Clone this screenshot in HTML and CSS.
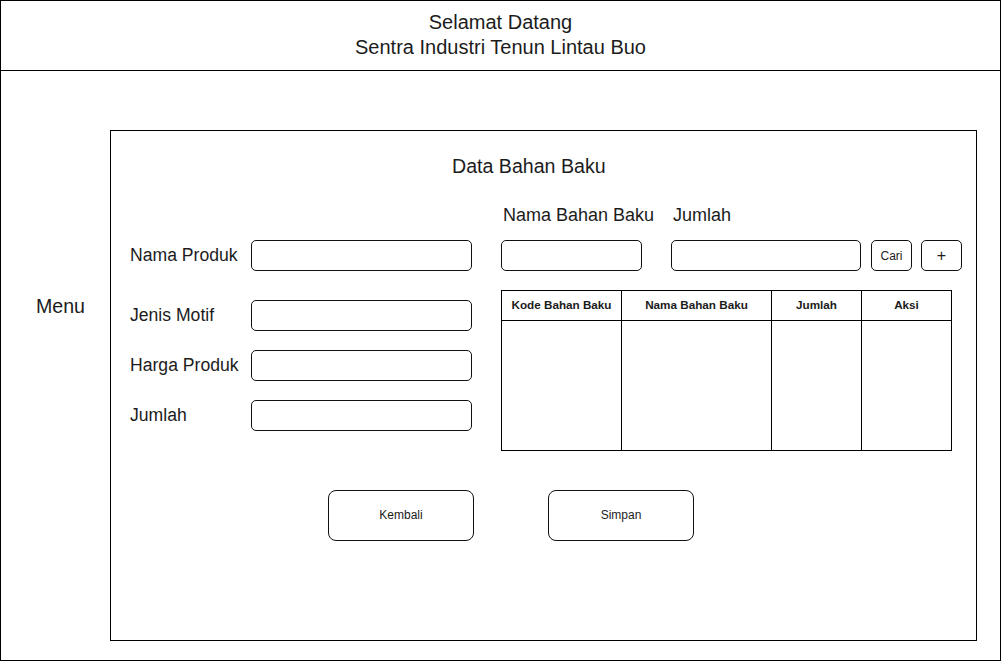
FILE: index.html
```html
<!DOCTYPE html>
<html lang="id">
<head>
<meta charset="utf-8">
<title>Data Bahan Baku</title>
<link rel="stylesheet" href="styles.css">
</head>
<body>
<div class="frame">
  <header class="header">
    <div>Selamat Datang</div>
    <div>Sentra Industri Tenun Lintau Buo</div>
  </header>
  <div class="main">
    <nav class="menu">Menu</nav>
    <section class="panel">
      <h1 class="title">Data Bahan Baku</h1>
      <div class="form-area">
        <div class="fields">
          <label class="label">Nama Produk</label>
          <div class="input"></div>
          <label class="label">Jenis Motif</label>
          <div class="input"></div>
          <label class="label">Harga Produk</label>
          <div class="input"></div>
          <label class="label">Jumlah</label>
          <div class="input"></div>
        </div>
        <div class="materials">
          <div class="mat-labels">
            <span class="mat-label mat-label-name">Nama Bahan Baku</span>
            <span class="mat-label">Jumlah</span>
          </div>
          <div class="mat-inputs">
            <div class="input input-name"></div>
            <div class="input input-qty"></div>
            <div class="small-btn btn-cari">Cari</div>
            <div class="small-btn btn-plus">+</div>
          </div>
          <div class="table">
            <div class="th">Kode Bahan Baku</div>
            <div class="th">Nama Bahan Baku</div>
            <div class="th">Jumlah</div>
            <div class="th">Aksi</div>
            <div class="td"></div>
            <div class="td"></div>
            <div class="td"></div>
            <div class="td"></div>
          </div>
        </div>
      </div>
      <div class="actions">
        <div class="btn">Kembali</div>
        <div class="btn">Simpan</div>
      </div>
    </section>
  </div>
</div>
</body>
</html>
```
FILE: styles.css
```css
* { box-sizing: border-box; }

body {
  margin: 0;
  background: #fff;
  font-family: "Liberation Sans", Arial, Helvetica, sans-serif;
  color: #1c1c1c;
}

.frame {
  width: 1001px;
  height: 661px;
  border: 1px solid #000;
  display: flex;
  flex-direction: column;
}

.header {
  height: 70px;
  border-bottom: 1px solid #000;
  display: flex;
  flex-direction: column;
  justify-content: center;
  align-items: center;
  font-size: 20px;
  line-height: 25px;
  padding-bottom: 1px;
}

.main {
  flex: 1;
  display: flex;
}

.menu {
  width: 109px;
  padding-left: 35px;
  padding-top: 224px;
  font-size: 19.6px;
  line-height: 22px;
}

.panel {
  margin-top: 59px;
  width: 867px;
  height: 511px;
  border: 1px solid #000;
  padding-top: 23px;
}

.title {
  margin: 0 0 0 341px;
  font-weight: normal;
  font-size: 19.6px;
  line-height: 24px;
}

.form-area {
  margin-top: 26px;
  display: flex;
  align-items: flex-start;
  gap: 29px;
}

.fields {
  margin-left: 19px;
  padding-top: 36px;
  display: grid;
  grid-template-columns: 121px 221px;
  grid-template-rows: 41px 31px 31px 31px;
  row-gap: 19px;
  align-items: start;
}

.label {
  font-size: 17.6px;
  line-height: 31px;
  white-space: nowrap;
}

.input {
  height: 31px;
  border: 1px solid #111;
  border-radius: 5px;
  background: #fff;
}

.materials {
  display: flex;
  flex-direction: column;
}

.mat-labels {
  display: flex;
  height: 22px;
  font-size: 18px;
  line-height: 22px;
  padding-left: 2px;
}

.mat-label-name {
  width: 170px;
}

.mat-inputs {
  margin-top: 14px;
  display: flex;
  align-items: flex-start;
}

.input-name { width: 141px; }
.input-qty { width: 190px; margin-left: 29px; }

.small-btn {
  width: 41px;
  height: 31px;
  border: 1px solid #111;
  border-radius: 5px;
  display: flex;
  align-items: center;
  justify-content: center;
  font-size: 12px;
}

.btn-cari { margin-left: 10px; }
.btn-plus { margin-left: 9px; font-size: 16px; }

.table {
  margin-top: 19px;
  display: grid;
  grid-template-columns: 120px 150px 90px 90px;
  grid-template-rows: 30px 130px;
  border-left: 1px solid #000;
  border-top: 1px solid #000;
  width: 451px;
}

.th, .td {
  border-right: 1px solid #000;
  border-bottom: 1px solid #000;
}

.th {
  display: flex;
  align-items: center;
  justify-content: center;
  font-size: 11.7px;
  font-weight: bold;
  padding-bottom: 2px;
}

.actions {
  margin-top: 39px;
  margin-left: 217px;
  display: flex;
  gap: 74px;
}

.btn {
  width: 146px;
  height: 51px;
  border: 1px solid #111;
  border-radius: 8px;
  display: flex;
  align-items: center;
  justify-content: center;
  font-size: 12px;
  padding-bottom: 1px;
}
```
